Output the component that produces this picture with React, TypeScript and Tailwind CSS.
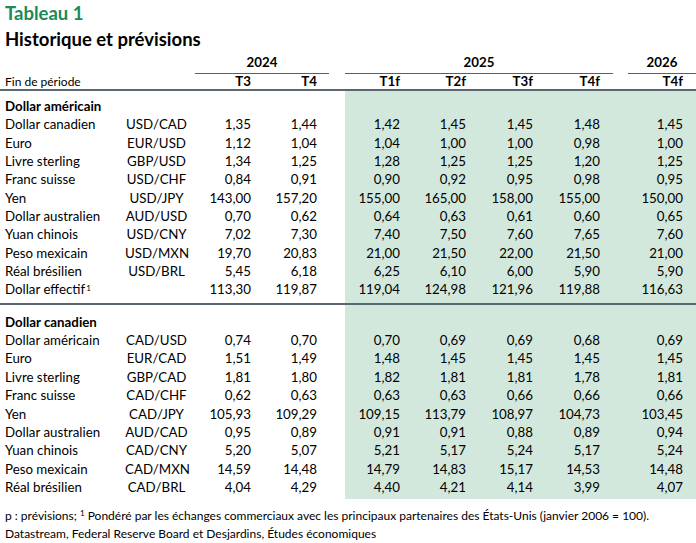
import React from 'react';

type Row = { name: string; pair: string; vals: string[]; sup?: boolean };

const usdRows: Row[] = [
    { name: 'Dollar canadien', pair: 'USD/CAD', vals: ['1,35', '1,44', '1,42', '1,45', '1,45', '1,48', '1,45'] },
    { name: 'Euro', pair: 'EUR/USD', vals: ['1,12', '1,04', '1,04', '1,00', '1,00', '0,98', '1,00'] },
    { name: 'Livre sterling', pair: 'GBP/USD', vals: ['1,34', '1,25', '1,28', '1,25', '1,25', '1,20', '1,25'] },
    { name: 'Franc suisse', pair: 'USD/CHF', vals: ['0,84', '0,91', '0,90', '0,92', '0,95', '0,98', '0,95'] },
    { name: 'Yen', pair: 'USD/JPY', vals: ['143,00', '157,20', '155,00', '165,00', '158,00', '155,00', '150,00'] },
    { name: 'Dollar australien', pair: 'AUD/USD', vals: ['0,70', '0,62', '0,64', '0,63', '0,61', '0,60', '0,65'] },
    { name: 'Yuan chinois', pair: 'USD/CNY', vals: ['7,02', '7,30', '7,40', '7,50', '7,60', '7,65', '7,60'] },
    { name: 'Peso mexicain', pair: 'USD/MXN', vals: ['19,70', '20,83', '21,00', '21,50', '22,00', '21,50', '21,00'] },
    { name: 'Réal brésilien', pair: 'USD/BRL', vals: ['5,45', '6,18', '6,25', '6,10', '6,00', '5,90', '5,90'] },
    { name: 'Dollar effectif', pair: '', sup: true, vals: ['113,30', '119,87', '119,04', '124,98', '121,96', '119,88', '116,63'] },
];

const cadRows: Row[] = [
    { name: 'Dollar américain', pair: 'CAD/USD', vals: ['0,74', '0,70', '0,70', '0,69', '0,69', '0,68', '0,69'] },
    { name: 'Euro', pair: 'EUR/CAD', vals: ['1,51', '1,49', '1,48', '1,45', '1,45', '1,45', '1,45'] },
    { name: 'Livre sterling', pair: 'GBP/CAD', vals: ['1,81', '1,80', '1,82', '1,81', '1,81', '1,78', '1,81'] },
    { name: 'Franc suisse', pair: 'CAD/CHF', vals: ['0,62', '0,63', '0,63', '0,63', '0,66', '0,66', '0,66'] },
    { name: 'Yen', pair: 'CAD/JPY', vals: ['105,93', '109,29', '109,15', '113,79', '108,97', '104,73', '103,45'] },
    { name: 'Dollar australien', pair: 'AUD/CAD', vals: ['0,95', '0,89', '0,91', '0,91', '0,88', '0,89', '0,94'] },
    { name: 'Yuan chinois', pair: 'CAD/CNY', vals: ['5,20', '5,07', '5,21', '5,17', '5,24', '5,17', '5,24'] },
    { name: 'Peso mexicain', pair: 'CAD/MXN', vals: ['14,59', '14,48', '14,79', '14,83', '15,17', '14,53', '14,48'] },
    { name: 'Réal brésilien', pair: 'CAD/BRL', vals: ['4,04', '4,29', '4,40', '4,21', '4,14', '3,99', '4,07'] },
];

const SHADE = 'bg-[#d3e8dc]';

function cn(...c: (string | false | undefined)[]) {
    return c.filter(Boolean).join(' ');
}

// fixed column widths, same for every row
function Cells({ cells, left, pair }: { cells: string[]; left: React.ReactNode; pair?: string }) {
    return (
        <div className="flex items-center h-[18.35px]">
            <div className="w-[125px] pl-[5px] whitespace-nowrap">{left}</div>
            <div className="w-[65px] text-center pr-[2px]">{pair}</div>
            <div className="w-[61px] text-right">{cells[0]}</div>
            <div className="w-[66px] text-right">{cells[1]}</div>
            <div className="w-[28px]" />
            <div className={cn('flex h-full items-center w-[351px]', SHADE)}>
                <div className="w-[55px] text-right">{cells[2]}</div>
                <div className="w-[66px] text-right">{cells[3]}</div>
                <div className="w-[67px] text-right">{cells[4]}</div>
                <div className="w-[67px] text-right">{cells[5]}</div>
                <div className="w-[83px] text-right">{cells[6]}</div>
            </div>
        </div>
    );
}

function Spacer({ h }: { h: string }) {
    return (
        <div className={cn('flex', h)}>
            <div className="w-[345px]" />
            <div className={cn('w-[351px]', SHADE)} />
        </div>
    );
}

function Section({ title, rows }: { title: string; rows: Row[] }) {
    return (
        <>
            <Cells cells={['', '', '', '', '', '', '']} left={<span className="font-bold">{title}</span>} />
            {rows.map((r) => (
                <Cells
                    key={r.name + r.pair}
                    cells={r.vals}
                    pair={r.pair}
                    left={
                        <span>
                            {r.name}
                            {r.sup && <sup className="text-[8px] relative -top-[3px] ml-[1px]">1</sup>}
                        </span>
                    }
                />
            ))}
        </>
    );
}

export default function App() {
    return (
        <div className="w-[696px] h-[543px] bg-white text-black overflow-hidden text-[13.3px] leading-none" style={{ fontFamily: 'Lato, "Open Sans", sans-serif' }}>
            {/* Titles */}
            <div className="pl-[5px] pt-[3px] h-[53px]">
                <div className="text-[18.5px] font-bold text-[#1b8a58] leading-[20px]">Tableau 1</div>
                <div className="text-[18.5px] font-bold leading-[20px] mt-[6px]">Historique et prévisions</div>
            </div>

            {/* Year header */}
            <div className="flex h-[21px] font-bold">
                <div className="w-[195px]" />
                <div className="w-[134px] flex flex-col justify-end border-b-[1.5px] border-[#2d7a50] text-center pb-[4px]">2024</div>
                <div className="w-[16px]" />
                <div className="w-[268px] flex flex-col justify-end border-b-[1.5px] border-[#2d7a50] text-center pb-[4px]">2025</div>
                <div className="w-[15px]" />
                <div className="w-[68px] flex flex-col justify-end border-b-[1.5px] border-[#2d7a50] text-center pb-[4px]">2026</div>
            </div>

            {/* Column header */}
            <div className="flex items-center h-[17px] border-b-2 border-[#5b6770]">
                <div className="w-[190px] pl-[5px] text-[12px]">Fin de période</div>
                <div className="w-[61px] text-right font-bold">T3</div>
                <div className="w-[66px] text-right font-bold">T4</div>
                <div className="w-[28px]" />
                <div className="w-[55px] text-right font-bold">T1f</div>
                <div className="w-[66px] text-right font-bold">T2f</div>
                <div className="w-[67px] text-right font-bold">T3f</div>
                <div className="w-[67px] text-right font-bold">T4f</div>
                <div className="w-[83px] text-right font-bold">T4f</div>
            </div>

            <Spacer h="h-[6.5px]" />
            <Section title="Dollar américain" rows={usdRows} />
            <Spacer h="h-[4px]" />
            <div className="h-[1.5px] bg-[#5b6770]" />
            <Spacer h="h-[8.5px]" />
            <Section title="Dollar canadien" rows={cadRows} />
            <Spacer h="h-[2px]" />

            {/* Notes */}
            <div className="pl-[5px] pt-[8px] text-[12px] leading-[18px] whitespace-nowrap">
                <div>
                    p : prévisions; <sup className="text-[8px]">1</sup> Pondéré par les échanges commerciaux avec les principaux partenaires des États-Unis (janvier 2006 = 100).
                </div>
                <div>Datastream, Federal Reserve Board et Desjardins, Études économiques</div>
            </div>
        </div>
    );
}
